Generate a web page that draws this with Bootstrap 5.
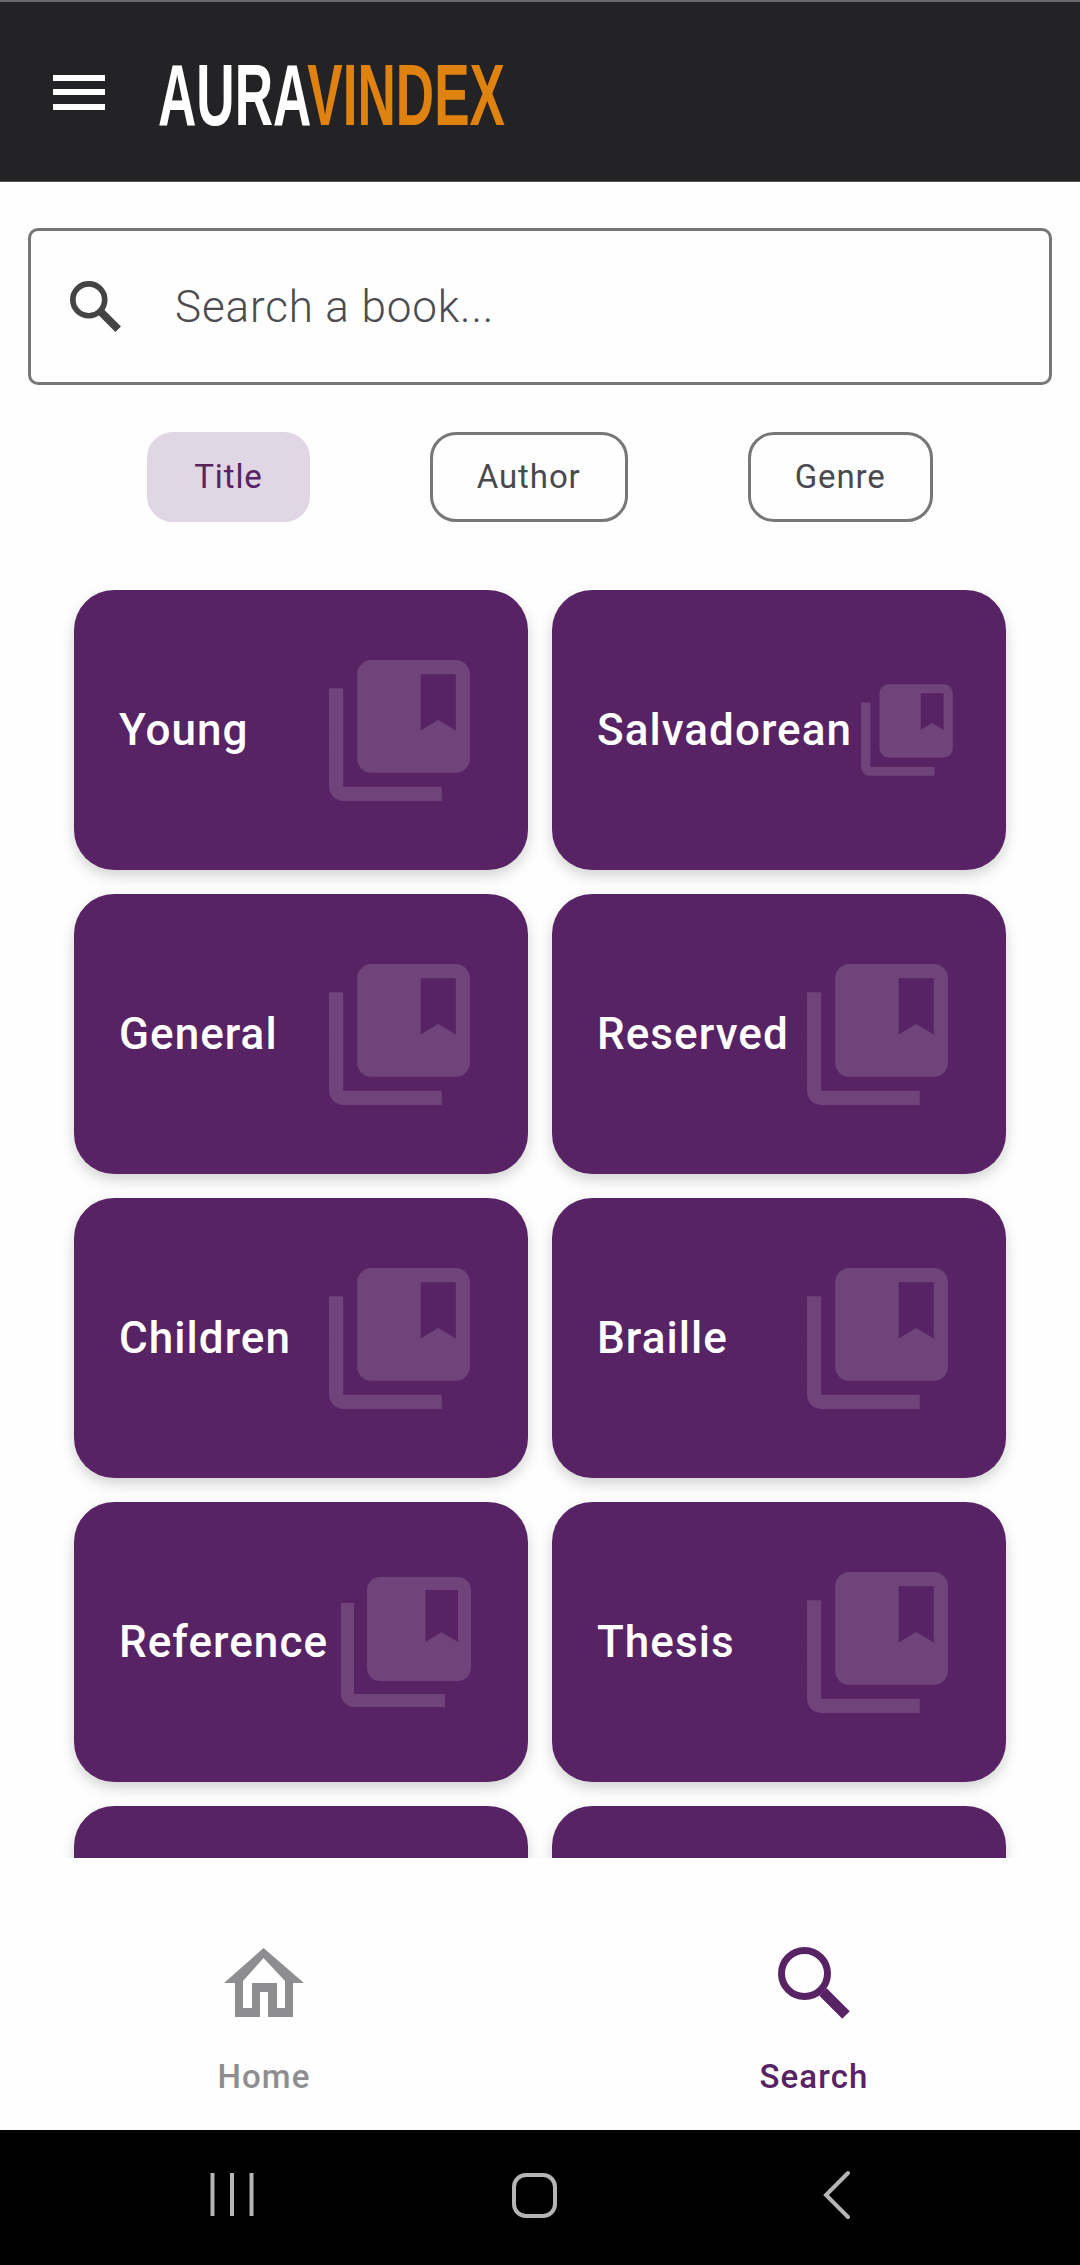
<!DOCTYPE html>
<html lang="en">
<head>
    <meta charset="UTF-8">
    <meta name="viewport" content="width=device-width, initial-scale=1.0">
    <title>AuraVindex</title>
    <link href="https://cdn.jsdelivr.net/npm/bootstrap@5.3.0/dist/css/bootstrap.min.css" rel="stylesheet">
    <style>
        body { height: 2265px; background: #fefefe; font-family: Roboto, "Liberation Sans", sans-serif; overflow: hidden; }
        .top-bar { height: 182px; background: #232325; border-top: 2px solid #6a6a6c; border-bottom: 1px solid #555; padding-left: 53px; }
        .menu-icon { width: 52px; height: 35px; margin-right: 53px; margin-top: 1px; }
        .brand { font-family: "Liberation Sans", sans-serif; font-size: 87px; font-weight: 700; line-height: 1; color: #fff; margin-top: 6px; transform: scaleX(.61); transform-origin: left center; }
        .brand-accent { color: #df8210; }
        .search-box { height: 157px; margin: 46px 28px 0; border: 3px solid #777; border-radius: 10px; padding-left: 39px; }
        .search-icon { width: 51px; height: 51px; margin-right: 54px; }
        .search-hint { font-size: 44px; font-weight: 300; letter-spacing: .85px; color: #4c4c50; }
        .chip-row { margin-top: 47px; gap: 120px; }
        .filter-chip { height: 90px; padding: 0 44px; border: 3px solid #777; border-radius: 26px; font-size: 33px; font-weight: 400; letter-spacing: .9px; color: #4a4a4e; }
        .filter-chip.active-chip { background: #e0d6e4; border-color: #e0d6e4; color: #572364; }
        .book-list { flex: 1 1 0; min-height: 0; margin-top: 68px; padding: 0 74px; overflow: hidden; }
        .book-grid { display: grid; grid-template-columns: 454px 454px; gap: 24px; }
        .book-tile { height: 280px; border: 0; border-radius: 40px; background: #572364; box-shadow: 0 6px 14px rgba(0,0,0,.17); padding: 0 44px 0 45px; color: #fff; }
        .book-name { flex: 0 0 auto; margin-right: auto; font-size: 44px; font-weight: 500; letter-spacing: 1.05px; }
        .book-icon { flex: 0 1 169px; min-width: 0; fill: #fff; fill-opacity: .15; }
        .bottom-nav { height: 272px; background: #fefefe; padding-top: 89px; }
        .nav-home { padding-right: 12px; color: #8e8e90; }
        .nav-search { padding-left: 8px; color: #572364; }
        .nav-glyph { height: 72px; }
        .nav-label { font-size: 33px; font-weight: 500; line-height: 38px; margin-top: 39px; letter-spacing: 1.1px; }
        .sys-bar { height: 135px; background: #000; }
        .sys-bar svg { position: absolute; left: 0; top: 0; }
    </style>
</head>
<body class="d-flex flex-column">

    <!-- App bar -->
    <header class="top-bar d-flex align-items-center flex-shrink-0">
        <svg class="menu-icon" viewBox="0 0 52 35" fill="#fff"><rect width="52" height="6" y="0"/><rect width="52" height="6" y="14"/><rect width="52" height="6" y="29"/></svg>
        <div class="brand">AURA<span class="brand-accent">VINDEX</span></div>
    </header>

    <!-- Search -->
    <div class="search-box d-flex align-items-center flex-shrink-0">
        <svg class="search-icon" viewBox="0 0 72 72" fill="none" stroke="#444"><circle cx="26.5" cy="26.5" r="22.5" stroke-width="8"/><path d="M44 44 68 68" stroke-width="11"/></svg>
        <span class="search-hint">Search a book...</span>
    </div>

    <!-- Filter chips -->
    <div class="chip-row d-flex justify-content-center flex-shrink-0">
        <div class="filter-chip active-chip d-flex align-items-center">Title</div>
        <div class="filter-chip d-flex align-items-center">Author</div>
        <div class="filter-chip d-flex align-items-center">Genre</div>
    </div>

    <!-- Genres -->
    <main class="book-list">
        <div class="book-grid" id="bookGrid"></div>
    </main>

    <!-- Bottom navigation -->
    <nav class="bottom-nav row g-0 flex-shrink-0">
        <div class="col-6 nav-home d-flex flex-column align-items-center">
            <svg class="nav-glyph" width="80" viewBox="0 0 80 72" fill="#8e8e90" fill-rule="evenodd"><path d="M39.500 1 80 36H69V70H44V45H36V70H11V36H0ZM39.500 11 19 34V61H28V36H53V61H61V34Z"/></svg>
            <div class="nav-label">Home</div>
        </div>
        <div class="col-6 nav-search d-flex flex-column align-items-center">
            <svg class="nav-glyph" width="72" viewBox="0 0 72 72" fill="none" stroke="#572364"><circle cx="26.500" cy="26.500" r="23" stroke-width="7"/><path d="M45 45 68 68" stroke-width="10.500"/></svg>
            <div class="nav-label">Search</div>
        </div>
    </nav>

    <!-- Android nav buttons -->
    <div class="sys-bar position-relative flex-shrink-0">
        <svg width="1080" height="135" viewBox="0 0 1080 135" fill="none" stroke="#b5b5b5" stroke-width="4">
            <path d="M212.500 43V86M232 43V86M251.500 43V86"/>
            <rect x="514" y="45" width="41" height="41" rx="12"/>
            <path d="M848 43 826 65 848 87" stroke-linecap="round"/>
        </svg>
    </div>

    <script src="https://cdn.jsdelivr.net/npm/bootstrap@5.3.0/dist/js/bootstrap.bundle.min.js"></script>
    <script>
        // genre tiles, the last row is cut off by the bottom nav
        const genres = ['Young', 'Salvadorean', 'General', 'Reserved', 'Children', 'Braille', 'Reference', 'Thesis', '', ''];
        const iconPath = 'M4 6H2v14c0 1.100.900 2 2 2h14v-2H4V6zm16-4H8c-1.100 0-2 .900-2 2v12c0 1.100.900 2 2 2h12c1.100 0 2-.900 2-2V4c0-1.100-.900-2-2-2zm0 10l-2.500-1.500L15 12V4h5v8z';
        document.getElementById('bookGrid').innerHTML = genres.map(name => `
            <div class="card book-tile flex-row align-items-center">
                <span class="book-name">${name}</span>
                <svg class="book-icon" viewBox="0 0 24 24"><path d="${iconPath}"/></svg>
            </div>`).join('');
    </script>
</body>
</html>
